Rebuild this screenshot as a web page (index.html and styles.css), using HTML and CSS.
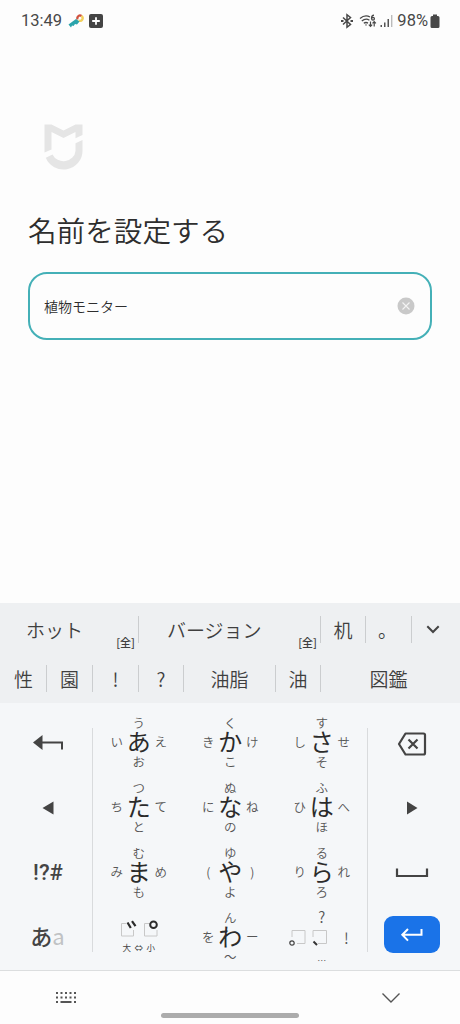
FILE: index.html
```html
<!DOCTYPE html>
<html lang="ja">
<head>
<meta charset="utf-8">
<title>名前を設定する</title>
<link rel="stylesheet" href="styles.css">
</head>
<body>
<div class="screen">
  <header class="status">
    <span class="clock">13:49</span>
    <svg class="wrench" width="16" height="16" viewBox="0 0 16 16"><path d="M9.500 6.500c-1-3 2-5 4-3.500" fill="none" stroke="#d0523f" stroke-width="2.200"/><path d="M13.500 3c2.500 2 .5 6-3 4.500" fill="none" stroke="#f2d05c" stroke-width="2.400"/><path d="M.5 11.500 8 6l3.500 2.500-2.500 3-2-.5-1.500 2-1.500-.5-1 2z" fill="#2ba4ab"/></svg>
    <svg class="plus" width="14" height="14" viewBox="0 0 14 14"><rect width="14" height="14" rx="2" fill="#444"/><path d="M7 3.2v7.6M3.2 7h7.6" stroke="#fff" stroke-width="1.8"/></svg>
    <span class="spacer"></span>
    <svg class="bluetooth" width="14" height="16" viewBox="0 0 14 16" fill="none" stroke="#484848" stroke-width="1.500"><path d="M3 4.500l7.500 7L7 14.300V1.700l3.500 2.800-7.500 7"/><path d="M1 8h2.500M10.500 8H13" stroke-width="2"/></svg>
    <svg class="wifi" width="18" height="16" viewBox="0 0 18 16" fill="none" stroke="#484848" stroke-width="1.300"><path d="M1 5.500q5-4.300 10-1.500M2.800 8q4-3.300 7.600-.8M4.800 10.300q2-1.500 4.200-.2"/><path d="M6 11.500h2L7 13z" fill="#484848" stroke="none"/><path d="M15 2.200q-2.500.2-2.500 3.300"/><circle cx="14" cy="5.700" r="1.400"/><path d="M11.500 8.500v5M9.800 11.700l1.700 1.800 1.700-1.800M15.200 13.500v-5M13.500 10.300l1.700-1.800 1.700 1.800" stroke-width="1.200"/></svg>
    <svg class="signal" width="13" height="14" viewBox="0 0 13 14" fill="#555"><path d="M.5 11H2v2H.5zM4 8.500h1.500V13H4zM7.500 5H9v8H7.500z"/><path d="M11 1h1.400v12H11z" fill="#bbb"/></svg>
    <span class="percent">98%</span>
    <svg class="battery" width="10" height="15" viewBox="0 0 10 15"><path d="M3 .5h4V2h1q1.500 0 1.500 1.500v9Q9.500 14 8 14H2Q.5 14 .5 12.500v-9Q.5 2 2 2h1z" fill="#484848"/></svg>
  </header>

  <main class="content">
    <svg class="logo" width="40" height="46" viewBox="0 0 40 46" fill="#e5e5e5"><path d="M.5.500H7.500L19.500 6.500 31.500.500h7V11l-7 3.200V8l-12 6-12-6v17.500L.5 28.500z"/><path d="M38.500 16v11a19 18.500 0 0 1-36.700 6.700L8.500 30.500a12 11 0 0 0 23-3.500v-7.800z"/></svg>
    <h1 class="title">名前を設定する</h1>
    <div class="field">
      <span class="value">植物モニター</span>
      <svg width="18" height="18" viewBox="0 0 18 18"><circle cx="9" cy="9" r="8.500" fill="#c9c9c9"/><path d="M5.500 5.500l7 7M12.500 5.500l-7 7" stroke="#f3f3f3" stroke-width="1.100"/></svg>
    </div>
  </main>

  <section class="suggestions">
    <div class="line first">
      <span class="word full">ホット<small>[全]</small></span>
      <span class="word full">バージョン<small>[全]</small></span>
      <span class="word">机</span>
      <span class="word stop">。</span>
      <span class="word more"><svg width="14" height="9" viewBox="0 0 14 9"><path d="M1.300 1.300 7 7l5.700-5.700" fill="none" stroke="#444" stroke-width="2"/></svg></span>
    </div>
    <div class="line second">
      <span class="word">性</span>
      <span class="word">園</span>
      <span class="word">!</span>
      <span class="word">?</span>
      <span class="word">油脂</span>
      <span class="word">油</span>
      <span class="word">図鑑</span>
    </div>
  </section>

  <section class="keyboard">
    <div class="side">
      <div class="fn"><svg width="32" height="16" viewBox="0 0 32 16"><path d="M1 7.500 10.500 0v15z" fill="#444"/><path d="M9 7.500h21v7" fill="none" stroke="#444" stroke-width="2"/></svg></div>
      <div class="fn"><svg width="12" height="14" viewBox="0 0 12 14"><path d="M.5 7 11.500.5v13z" fill="#444"/></svg></div>
      <div class="fn symbols">!?#</div>
      <div class="fn mode">あ<span>a</span></div>
    </div>
    <div class="kana">
      <div class="key"><i class="up">う</i><i>い</i><b>あ</b><i>え</i><i class="down">お</i></div>
      <div class="key"><i class="up">く</i><i>き</i><b>か</b><i>け</i><i class="down">こ</i></div>
      <div class="key"><i class="up">す</i><i>し</i><b>さ</b><i>せ</i><i class="down">そ</i></div>
      <div class="key"><i class="up">つ</i><i>ち</i><b>た</b><i>て</i><i class="down">と</i></div>
      <div class="key"><i class="up">ぬ</i><i>に</i><b>な</b><i>ね</i><i class="down">の</i></div>
      <div class="key"><i class="up">ふ</i><i>ひ</i><b>は</b><i>へ</i><i class="down">ほ</i></div>
      <div class="key"><i class="up">む</i><i>み</i><b>ま</b><i>め</i><i class="down">も</i></div>
      <div class="key"><i class="up">ゆ</i><i>(</i><b>や</b><i>)</i><i class="down">よ</i></div>
      <div class="key"><i class="up">る</i><i>り</i><b>ら</b><i>れ</i><i class="down">ろ</i></div>
      <div class="marks">
        <svg width="38" height="17" viewBox="0 0 38 17" fill="none"><path d="M6 3.500H1.500v12.500h12V10M30 3.500h-5.500v12.500h12.500V10" stroke="#c8c8c8"/><path d="M7.500 2.500l3.300 5.500M12 1.200l3.500 5" stroke="#2b2b2b" stroke-width="2.200"/><circle cx="33.500" cy="4.800" r="3.300" stroke="#2b2b2b" stroke-width="2"/></svg>
        <span class="size">大 ⇔ 小</span>
      </div>
      <div class="key"><i class="up">ん</i><i>を</i><b>わ</b><i>ー</i><i class="down">～</i></div>
      <div class="key punct"><i class="up">?</i><svg width="40" height="18" viewBox="0 0 40 18" fill="none"><path d="M4 8V1.500h13v13h-8M25 8V1.500h13.500v13H30" stroke="#c8c8c8"/><circle cx="4" cy="14" r="2.200" stroke="#444" stroke-width="1.200"/><path d="M25.500 12.500l3.500 3.500" stroke="#333" stroke-width="2"/></svg><i>!</i><i class="down">…</i></div>
    </div>
    <div class="side">
      <div class="fn delete"><svg width="30" height="24" viewBox="0 0 30 24" fill="none" stroke="#444"><path d="M8.500 1.500h18q1.500 0 1.500 1.500v18q0 1.500-1.500 1.500h-18L2 12z" stroke-width="2.200" stroke-linejoin="round"/><path d="M11.500 7.500l9 9M20.500 7.500l-9 9" stroke-width="2.200"/></svg></div>
      <div class="fn"><svg width="12" height="14" viewBox="0 0 12 14"><path d="M1 .5 11.500 7 1 13.500z" fill="#444"/></svg></div>
      <div class="fn"><svg width="34" height="10" viewBox="0 0 34 10"><path d="M2 .5V8h30V.5" fill="none" stroke="#444" stroke-width="2.200"/></svg></div>
      <div class="fn"><div class="enter"><svg width="24" height="16" viewBox="0 0 24 16" fill="none" stroke="#fff" stroke-width="2"><path d="M8 3 2.300 8.800 8 14.600M2.500 8.800h19V3"/></svg></div></div>
    </div>
  </section>

  <nav class="navbar">
    <svg class="board" width="22" height="13" viewBox="0 0 22 13" fill="none" stroke="#555" stroke-width="2"><path d="M1 2h20M1 6.500h20" stroke-dasharray="2 2.500"/><path d="M1 11h2M19 11h2M5.500 11h11"/></svg>
    <span class="handle"></span>
    <svg class="hide" width="20" height="12" viewBox="0 0 20 12"><path d="M1.500 1.500 10 10l8.500-8.500" fill="none" stroke="#555" stroke-width="1.400"/></svg>
  </nav>
</div>
</body>
</html>
```
FILE: styles.css
```css
* { box-sizing: border-box; }
body {
  margin: 0;
  background: #fdfdfd;
  color: #2e2e2e;
  font-family: "Noto Sans CJK JP", sans-serif;
}
svg { display: block; flex: none; }
.screen { width: 460px; height: 1024px; display: flex; flex-direction: column; overflow: hidden; }

.status {
  height: 40px;
  padding: 2px 20px 0 21px;
  display: flex;
  align-items: center;
  font: 16.500px/20px Roboto, sans-serif;
  color: #484848;
}
.clock { width: 47px; }
.plus { margin-left: 5px; }
.spacer { flex: 1; }
.wifi { margin-left: 5px; }
.signal { margin: 0 5px 0 3px; }
.percent { margin-right: 2px; margin-left: -1px; }

.content { height: 563px; padding: 84px 28px 0; }
.logo { margin-left: 16px; }
.title { margin: 38px 0 0; font-size: 28.600px; line-height: 44px; font-weight: 350; }
.field {
  height: 68px;
  margin-top: 20px;
  padding: 0 15px 0 14px;
  border: 2px solid #44b0b7;
  border-radius: 19px;
  display: flex;
  align-items: center;
  justify-content: space-between;
}
.value { font-size: 14px; line-height: 20px; font-weight: 350; }

.suggestions { height: 100px; background: #eef0f2; color: #3f3f3f; font-size: 19px; font-weight: 350; }
.line { display: grid; height: 50px; align-items: center; padding-top: 2px; }
.first { grid-template-columns: 139px 182px 45px 46px 48px; }
.second { grid-template-columns: 47px 46px 46px 45px 92px 45px 139px; padding-top: 1px; }
.word {
  height: 27px;
  display: flex;
  align-items: center;
  justify-content: center;
  border-right: 1px solid #cbcdcf;
}
.word:first-child { padding-left: 1px; }
.word:last-child { border-right: 0; padding: 0 4px 0 0; }
.word.more { padding-right: 6px; }
.stop { padding-right: 2px; }
.word.full { justify-content: space-between; padding: 0 3px 0 26px; }
.word.full + .full { padding-left: 28px; }
.full small { font-size: 11px; font-weight: 500; align-self: flex-end; line-height: 13px; margin-bottom: -6px; }

.keyboard {
  height: 268px;
  padding-top: 8px;
  background: #f5f7f9;
  border-bottom: 1px solid #dcdedf;
  display: grid;
  grid-template-columns: 92px 276px 92px;
}
.side { display: grid; grid-template-rows: repeat(4, 65px); }
.fn { display: flex; align-items: center; justify-content: center; padding: 0 0 1px 3px; color: #444; }
.side:last-child .fn { padding-left: 0; padding-right: 4px; }
.side:last-child .delete { padding-bottom: 0; }
.symbols { font: 500 22px/26px Roboto, sans-serif; padding-left: 4px; }
.mode { font-size: 22px; font-weight: 500; padding-bottom: 7px; }
.mode span { color: #c0c2c4; font-weight: 400; }
.enter { width: 56px; height: 37px; margin-top: -8px; border-radius: 9px; background: #1a73e8; display: flex; align-items: center; justify-content: center; }

.kana {
  display: grid;
  grid-template-columns: repeat(3, 91.500px);
  grid-template-rows: repeat(4, 65px);
  height: 260px;
  background: linear-gradient(#d9dbdd, #d9dbdd) 0 17px / 1px 224px no-repeat, linear-gradient(#d9dbdd, #d9dbdd) 275px 17px / 1px 224px no-repeat;
}
.key {
  display: grid;
  grid-template-columns: 20px 24px 20px;
  grid-template-rows: 14px 25px 14px;
  align-content: center;
  justify-content: center;
  align-items: center;
  justify-items: center;
  padding: 0 0 3px 2px;
  color: #2b2b2b;
}
.key i { font-style: normal; font-size: 12.500px; line-height: 14px; font-weight: 350; color: #555; }
.key b { font-size: 24px; line-height: 25px; font-weight: 400; margin: -2px 0 1px; }
.up, .down { grid-column: 1 / 4; }
.marks { display: flex; flex-direction: column; align-items: center; padding: 14px 0 0 2px; gap: 4px; }
.size { font-size: 8.500px; line-height: 12px; color: #444; word-spacing: 1.500px; }
.punct svg { grid-column: 1 / 3; margin: 2px 0 0 -7px; }
.punct i { font-size: 15px; }
.punct .up { margin-top: -2px; }
.punct i:nth-of-type(2) { padding: 1px 0 0 5px; }
.punct .down { font-size: 9px; margin-top: 9px; }

.navbar { flex: 1; display: grid; grid-template-columns: 131px 198px 1fr; align-items: center; justify-items: center; }
.handle { width: 138px; height: 5px; border-radius: 3px; background: #acacac; align-self: end; margin-bottom: 6px; }
.hide { margin-right: 8px; }
```
